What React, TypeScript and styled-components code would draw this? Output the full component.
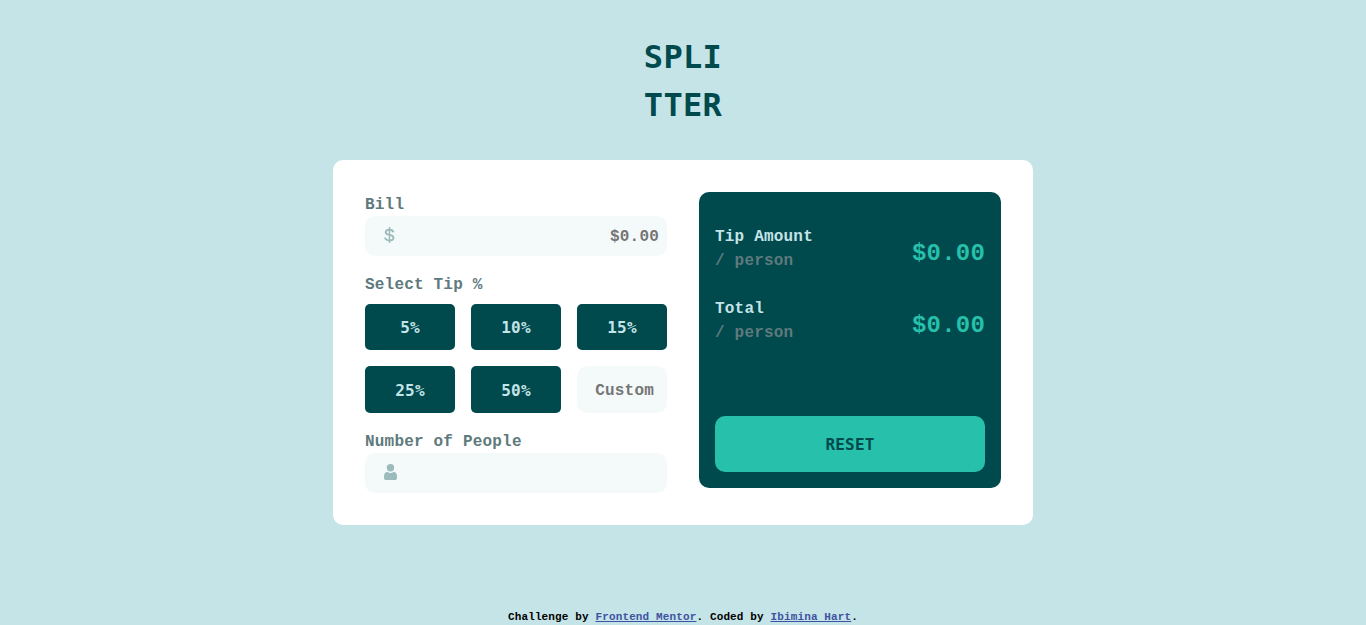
import React from "react";
import styled, { createGlobalStyle } from "styled-components";

const GlobalStyle = createGlobalStyle`
  *, *::before, *::after { box-sizing: border-box; margin: 0; padding: 0; }
  body, button, input {
    font-family: "Liberation Mono", monospace;
    font-weight: 700;
    letter-spacing: 0.012em;
  }
  body { background: #c5e4e7; font-size: 16px; line-height: 24px; }
`;

const display = `
  font-family: "DejaVu Sans Mono", monospace;
  letter-spacing: 0.01em;
`;

const Page = styled.div`
  display: flex;
  flex-direction: column;
  align-items: center;
  height: 625px;
  padding-top: 32px;
  overflow: hidden;
`;

const Title = styled.h1`
  ${display}
  font-size: 32px;
  line-height: 48px;
  color: #00494d;
  padding-top: 1px;
  height: 96px;
`;

const Card = styled.main`
  display: grid;
  grid-template-columns: 1fr 1fr;
  gap: 32px;
  align-items: start;
  width: 700px;
  height: 365px;
  margin-top: 32px;
  padding: 32px;
  background: #fff;
  border-radius: 10px;
`;

const Form = styled.form`
  display: flex;
  flex-direction: column;
  gap: 16px;
`;

const Group = styled.div<{ $gap?: number }>`
  display: flex;
  flex-direction: column;
  gap: ${(p) => p.$gap ?? 0}px;
`;

const Label = styled.label`
  height: 24px;
  padding-top: 1px;
  color: #5e7a7d;
`;

const Field = styled.div`
  display: flex;
  align-items: center;
  height: 40px;
  padding: 0 8px 0 19px;
  background: #f4fafa;
  border-radius: 10px;

  svg { flex: none; margin-bottom: 2px; }
`;

const Input = styled.input`
  flex: 1;
  min-width: 0;
  height: 100%;
  padding-top: 2px;
  border: 0;
  outline: 0;
  background: transparent;
  font-size: 16px;
  text-align: right;
  color: #00494d;
  &::placeholder { color: #757575; }
`;

const Tips = styled.div`
  display: grid;
  grid-template-columns: repeat(3, 90px);
  grid-template-rows: 46px 47px;
  gap: 16px;
`;

const Tip = styled.button`
  ${display}
  padding-top: 1px;
  border: 0;
  border-radius: 5px;
  background: #00494d;
  color: #c5e4e7;
  font-size: 16px;
`;

const Custom = styled(Input)`
  width: 90px;
  padding: 2px 13px 0 0;
  border-radius: 10px;
  background: #f4fafa;
`;

const Panel = styled.section`
  display: flex;
  flex-direction: column;
  gap: 24px;
  height: 296px;
  padding: 32px 16px 16px;
  border-radius: 10px;
  background: #00494d;
`;

const Result = styled.div`
  display: flex;
  justify-content: space-between;
  height: 48px;
`;

const ResultName = styled.div`
  padding-top: 1px;
  color: #c5e4e7;
`;

const Muted = styled.p`
  color: #5e7a7d;
`;

const Amount = styled.strong`
  padding-top: 6px;
  font-size: 24px;
  line-height: 48px;
  color: #26c0ab;
`;

const Reset = styled.button`
  ${display}
  height: 56px;
  margin-top: auto;
  padding-top: 1px;
  border: 0;
  border-radius: 10px;
  background: #26c0ab;
  color: #00494d;
  font-size: 16px;
`;

const Footer = styled.footer`
  margin-top: 84px;
  font-size: 11px;
  line-height: 16px;
  letter-spacing: 0.13px;
  color: #000;
  white-space: pre;

  a { color: #3e52a3; }
`;

const DollarIcon = () => (
  <svg width="11" height="16" viewBox="0 0 11 16" fill="none" stroke="#9dbbbd" strokeWidth="1.9">
    <path d="M9.400 5.300C9.200 3.600 7.700 2.700 5.500 2.700 3.200 2.700 1.700 3.700 1.700 5.200c0 1.800 1.600 2.300 3.800 2.700 2.200.4 4 1 4 2.800 0 1.700-1.600 2.700-4 2.700S1.300 12.400 1.100 10.500" />
    <path d="M5.500 0v16" strokeWidth="1.500" />
  </svg>
);

const PersonIcon = () => (
  <svg width="13" height="16" viewBox="0 0 13 16" fill="#9dbbbd">
    <circle cx="6.500" cy="3.700" r="3.700" />
    <path d="M3.300 7.700C4.200 8.500 5.300 8.900 6.500 8.900s2.300-.4 3.200-1.200C11.700 8 13 9.800 13 12v1.700C13 15.200 12.200 16 10.900 16H2.100C.8 16 0 15.200 0 13.700V12c0-2.200 1.300-4 3.300-4.300z" />
  </svg>
);

const results = ["Tip Amount", "Total"];

export default function App() {
  return (
    <>
      <GlobalStyle />
      <Page>
        <Title>SPLI<br />TTER</Title>
        <Card>
          <Form>
            <Group>
              <Label htmlFor="bill">Bill</Label>
              <Field>
                <DollarIcon />
                <Input id="bill" placeholder="$0.00" />
              </Field>
            </Group>
            <Group $gap={8}>
              <Label as="p">Select Tip %</Label>
              <Tips>
                {[5, 10, 15, 25, 50].map((tip) => (
                  <Tip key={tip} type="button">{tip}%</Tip>
                ))}
                <Custom placeholder="Custom" />
              </Tips>
            </Group>
            <Group>
              <Label htmlFor="people">Number of People</Label>
              <Field>
                <PersonIcon />
                <Input id="people" />
              </Field>
            </Group>
          </Form>
          <Panel>
            {results.map((name) => (
              <Result key={name}>
                <ResultName>
                  <p>{name}</p>
                  <Muted>/ person</Muted>
                </ResultName>
                <Amount>$0.00</Amount>
              </Result>
            ))}
            <Reset type="button">RESET</Reset>
          </Panel>
        </Card>
        <Footer>
          Challenge by <a href="#mentor">Frontend Mentor</a>. Coded by <a href="#author">Ibimina Hart</a>.
        </Footer>
      </Page>
    </>
  );
}
